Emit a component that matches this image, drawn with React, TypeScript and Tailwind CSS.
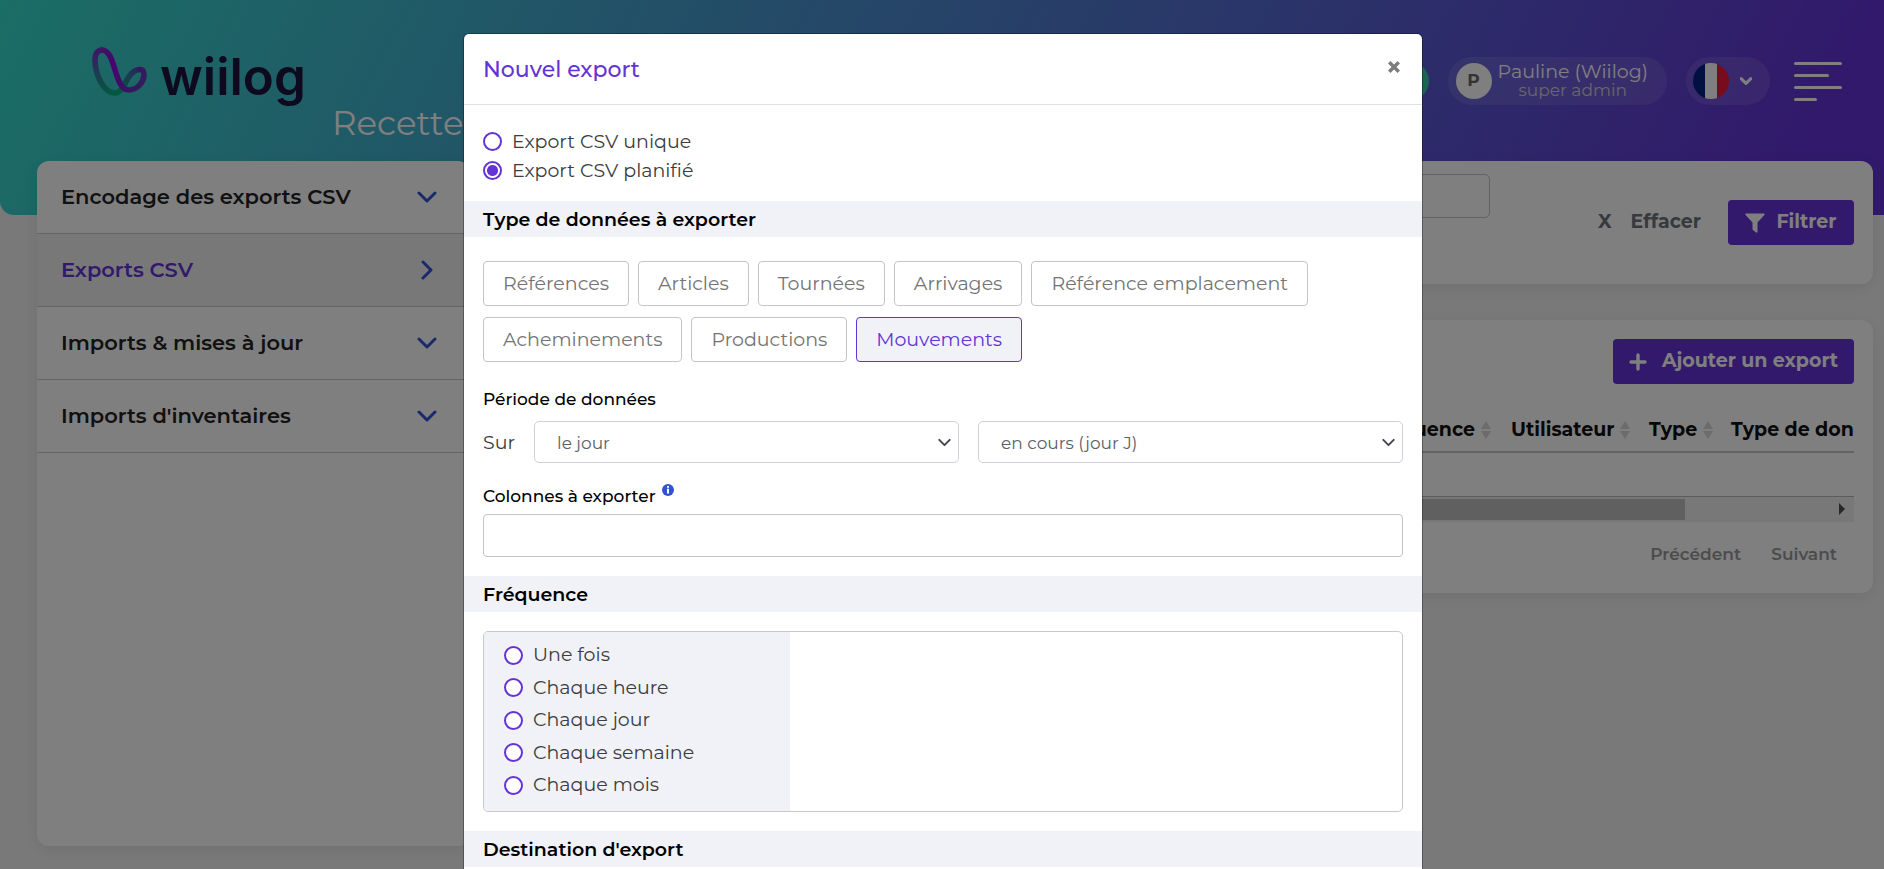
import type { ReactNode } from "react";

const sections = [
  { label: "Encodage des exports CSV", active: false },
  { label: "Exports CSV", active: true },
  { label: "Imports & mises à jour", active: false },
  { label: "Imports d'inventaires", active: false },
];

const dataTypes = [
  "Références",
  "Articles",
  "Tournées",
  "Arrivages",
  "Référence emplacement",
  "Acheminements",
  "Productions",
  "Mouvements",
];

const frequencies = ["Une fois", "Chaque heure", "Chaque jour", "Chaque semaine", "Chaque mois"];

function LogoMark() {
  return (
    <svg width="56" height="52" viewBox="0 0 56 52" fill="none" aria-hidden="true">
      <defs>
        <linearGradient id="loopLeft" x1="8" y1="4" x2="22" y2="48" gradientUnits="userSpaceOnUse">
          <stop offset="0" stopColor="#7a2cd0" />
          <stop offset="0.4" stopColor="#3f72a8" />
          <stop offset="1" stopColor="#06b080" />
        </linearGradient>
        <linearGradient id="loopRight" x1="24" y1="46" x2="50" y2="22" gradientUnits="userSpaceOnUse">
          <stop offset="0" stopColor="#06a87c" />
          <stop offset="0.5" stopColor="#2f80a0" />
          <stop offset="1" stopColor="#5a40bc" />
        </linearGradient>
        <linearGradient id="stroke" x1="8" y1="4" x2="52" y2="28" gradientUnits="userSpaceOnUse">
          <stop offset="0" stopColor="#7a2cc0" />
          <stop offset="0.4" stopColor="#9406e0" />
          <stop offset="1" stopColor="#6438b8" />
        </linearGradient>
      </defs>
      <path d="M10 4 C3 4 2 13 4 23 C7 36 14 47 23 47 C28 47 31 42 33 38" stroke="url(#loopLeft)" strokeWidth="5.600" strokeLinecap="round" />
      <path d="M32 39 C36 32 40 23.500 48 23.500" stroke="url(#loopRight)" strokeWidth="5.600" strokeLinecap="round" />
      <path d="M10 4 C24 4 22 44 36.500 44 C46 44 52 35 52 29 C52 25 51 23.500 48 23.500" stroke="url(#stroke)" strokeWidth="5.600" strokeLinecap="round" />
    </svg>
  );
}

function Chevron({ className }: { className: string }) {
  return (
    <svg viewBox="0 0 20 20" className={className} fill="none" stroke="currentColor" strokeLinecap="round" strokeLinejoin="round" aria-hidden="true">
      <path d="M2 6 L10 14 L18 6" />
    </svg>
  );
}

function SortIcon() {
  return (
    <svg width="10" height="18" viewBox="0 0 10 18" fill="#d8d8d8" aria-hidden="true" className="shrink-0">
      <path d="M5 0 L10 8 H0 Z M5 18 L0 10 H10 Z" />
    </svg>
  );
}

function TopBar() {
  return (
    <header className="h-[215px] rounded-bl-[14px] bg-[linear-gradient(118deg,#35dccb_0%,#6433d6_94%)]">
      <div className="flex items-start justify-between pr-[42px] pl-[92px]">
        <div className="flex items-start">
          <a href="#accueil" aria-label="wiilog" className="flex w-[240px] items-start gap-[12px] pt-[46px]">
            <LogoMark />
            <span className="font-['Inter',sans-serif] text-[51px]/[62px] font-semibold text-[#1a1440]">wiilog</span>
          </a>
          <span className="pt-[102px] text-[34px]/[42px] font-normal text-white">Recette</span>
        </div>
        <div className="flex items-center gap-[19px] pt-[57px]">
          <span className="size-[38px] rounded-full bg-[#36c9a8]" />
          <button className="flex h-12 items-center gap-[6px] rounded-full bg-white/10 pr-[19px] pl-2">
            <span className="flex size-9 items-center justify-center rounded-full bg-white text-[17px] font-bold text-[#666]">P</span>
            <span className="flex flex-col items-center text-[19px]/[18px] text-white">
              <span>Pauline (Wiilog)</span>
              <span className="text-[17px]/[18px] text-[#cfcfcf]">super admin</span>
            </span>
          </button>
          <button aria-label="Langue" className="flex h-12 items-center gap-[11px] rounded-full bg-white/10 pr-[18px] pl-[7px]">
            <span className="flex size-9 overflow-hidden rounded-full">
              <span className="flex-1 bg-[#002080]" />
              <span className="flex-1 bg-white" />
              <span className="flex-1 bg-[#f01838]" />
            </span>
            <Chevron className="size-3 stroke-[5px] text-white" />
          </button>
          <button aria-label="Menu" className="ml-[5px] flex w-12 flex-col gap-[9px]">
            <span className="h-[3px] w-full rounded-full bg-white" />
            <span className="h-[3px] w-[35px] rounded-full bg-white" />
            <span className="h-[3px] w-full rounded-full bg-white" />
            <span className="h-[3px] w-[23px] rounded-full bg-white" />
          </button>
        </div>
      </div>
    </header>
  );
}

function Sidebar() {
  return (
    <nav className="h-[685px] w-[433px] shrink-0 overflow-hidden rounded-[12px] bg-white shadow-[0_4px_16px_rgba(0,0,0,0.08)]">
      {sections.map((s) => (
        <a
          key={s.label}
          href="#section"
          className={
            s.active
              ? "flex h-[73px] items-center justify-between border-b border-[#c8c8c8] bg-[#f1f1f1] pr-[33px] pl-6 text-[21px] font-semibold text-[#6433d6]"
              : "flex h-[73px] items-center justify-between border-b border-[#c8c8c8] pr-[33px] pl-6 text-[21px] font-semibold text-[#222]"
          }
        >
          {s.label}
          <Chevron className={s.active ? "size-5 -rotate-90 stroke-[3px] text-[#3353d7]" : "size-5 stroke-[3px] text-[#3353d7]"} />
        </a>
      ))}
    </nav>
  );
}

function Content() {
  return (
    <main className="flex min-w-0 flex-1 flex-col gap-9">
      <section className="flex h-[123px] items-start justify-end rounded-[12px] bg-white pt-[13px] pr-[19px] shadow-[0_4px_16px_rgba(0,0,0,0.08)]">
        <input aria-label="Filtre" className="h-11 w-[300px] rounded-[5px] border border-[#c4c4c4]" />
        <div className="mt-[26px] ml-[108px] flex h-[45px] items-center">
          <button className="mr-[27px] flex items-center gap-[19px] text-[19px] font-bold text-[#6c757d]">
            <span>X</span>
            <span>Effacer</span>
          </button>
          <button className="flex h-[45px] w-[126px] items-center justify-center gap-[11px] rounded-[4px] bg-[#6433d6] text-[19px] font-bold text-white">
            <svg width="20" height="20" viewBox="0 0 20 20" fill="currentColor" aria-hidden="true">
              <path d="M1.200 0.500 H18.800 C19.800 0.500 20 1.500 19.400 2.100 L12.500 9.500 V18.800 C12.500 19.600 11.800 19.900 11.200 19.500 L8.200 17.200 C7.700 16.800 7.500 16.500 7.500 16 V9.500 L0.600 2.100 C0 1.500 0.200 0.500 1.200 0.500 Z" />
            </svg>
            Filtrer
          </button>
        </div>
      </section>
      <section className="h-[273px] rounded-[12px] bg-white px-[19px] pt-[19px] shadow-[0_4px_16px_rgba(0,0,0,0.08)]">
        <div className="flex justify-end">
          <button className="flex h-[45px] w-[241px] items-center justify-center gap-[15px] rounded-[4px] bg-[#6433d6] text-[19px] font-bold text-white">
            <svg width="18" height="18" viewBox="0 0 18 18" stroke="currentColor" strokeWidth="3.400" strokeLinecap="round" aria-hidden="true">
              <path d="M9 2 V16 M2 9 H16" />
            </svg>
            Ajouter un export
          </button>
        </div>
        <table className="mt-[22px] w-full table-fixed text-left text-[19px] text-[#111]">
          <thead>
            <tr className="h-[46px] border-b-2 border-[#c8c8c8]">
              <th className="pt-[3px] font-bold">
                <span className="flex items-center justify-end gap-[6px] pr-5">Fréquence <SortIcon /></span>
              </th>
              <th className="w-[138px] pt-[3px] font-bold">
                <span className="flex items-center gap-[6px]">Utilisateur <SortIcon /></span>
              </th>
              <th className="w-[82px] pt-[3px] font-bold">
                <span className="flex items-center gap-[6px]">Type <SortIcon /></span>
              </th>
              <th className="w-[123px] pt-[3px] font-bold whitespace-nowrap">Type de don</th>
            </tr>
          </thead>
          <tbody>
            <tr className="h-11 border-b border-[#b8b8b8]">
              <td colSpan={4} />
            </tr>
          </tbody>
        </table>
        <div className="flex h-[25px] items-center justify-between bg-[#f1f1f1] pr-[9px]">
          <span className="h-[21px] w-[88%] bg-[#c1c1c1]" />
          <svg width="6" height="12" viewBox="0 0 6 12" fill="#505050" aria-hidden="true">
            <path d="M0 0 L6 6 L0 12 Z" />
          </svg>
        </div>
        <div className="mt-5 flex justify-end gap-[30px] pr-[17px] text-[17px]/[24px] font-semibold text-[#999]">
          <button>Précédent</button>
          <button>Suivant</button>
        </div>
      </section>
    </main>
  );
}

function Radio({ name, label, defaultChecked }: { name: string; label: string; defaultChecked?: boolean }) {
  return (
    <label className="flex items-center gap-[10px]">
      <input
        type="radio"
        name={name}
        defaultChecked={defaultChecked}
        className="size-[19px] shrink-0 appearance-none rounded-full border-2 border-[#6433d6] bg-white checked:bg-[radial-gradient(circle,#6433d6_0_5px,white_6px)]"
      />
      {label}
    </label>
  );
}

function SectionTitle({ children }: { children: ReactNode }) {
  return <h3 className="flex h-9 items-center bg-[#f1f2f7] px-[19px] pt-[2px] text-[19px] font-semibold text-black">{children}</h3>;
}

function Select({ label, value }: { label: string; value: string }) {
  return (
    <div className="relative flex-1">
      <select
        aria-label={label}
        className="h-[42px] w-full appearance-none rounded-[5px] border border-[#ced0da] bg-white px-[22px] pt-[3px] text-[17px] text-[#5a6067]"
      >
        <option>{value}</option>
      </select>
      <Chevron className="pointer-events-none absolute top-[15px] right-2 size-[13px] stroke-[3px] text-[#43474f]" />
    </div>
  );
}

function ExportModal() {
  return (
    <div role="dialog" aria-labelledby="modal-title" className="mx-auto mt-[34px] w-full max-w-[958px] overflow-hidden rounded-t-[5px] bg-white text-[19px] text-[#3c3c3c] ring-1 ring-black/30">
      <div className="flex h-[71px] items-start justify-between border-b border-[#dee2e6] px-[19px]">
        <h2 id="modal-title" className="pt-[21px] text-[22px]/[30px] font-medium text-[#6433d6]">Nouvel export</h2>
        <button aria-label="Fermer" className="mt-[26px] mr-[3px] text-[#7c7c7c]">
          <svg width="12" height="14" viewBox="0 0 12 14" stroke="currentColor" strokeWidth="3.600" aria-hidden="true">
            <path d="M1.200 2.200 L10.800 11.800 M10.800 2.200 L1.200 11.800" />
          </svg>
        </button>
      </div>
      <div className="flex flex-col items-start px-[19px] pt-[22px] pb-4 leading-[29px]">
        <Radio name="mode" label="Export CSV unique" />
        <Radio name="mode" label="Export CSV planifié" defaultChecked />
      </div>
      <SectionTitle>Type de données à exporter</SectionTitle>
      <div className="px-[19px] pt-6 pb-[19px]">
        <div className="flex flex-wrap gap-x-[9px] gap-y-[11px]">
          {dataTypes.map((t) => (
            <button
              key={t}
              className={
                t === "Mouvements"
                  ? "h-[45px] rounded-[4px] border border-[#6433d6] bg-[#f1f2f7] px-[19px] pt-[2px] text-[#6433d6]"
                  : "h-[45px] rounded-[4px] border border-[#c4c4c4] px-[19px] pt-[2px] text-[#747474]"
              }
            >
              {t}
            </button>
          ))}
        </div>
        <p className="mt-[25px] text-[17px]/[24px] font-medium text-black">Période de données</p>
        <div className="mt-[10px] flex items-center gap-[19px]">
          <span className="pt-[2px]">Sur</span>
          <Select label="Période" value="le jour" />
          <Select label="Décalage" value="en cours (jour J)" />
        </div>
        <label htmlFor="columns" className="mt-[21px] flex gap-[6px] text-[17px]/[24px] font-medium text-black">
          Colonnes à exporter
          <svg width="12" height="12" viewBox="0 0 12 12" aria-hidden="true">
            <circle cx="6" cy="6" r="6" fill="#3353d7" />
            <path d="M5 2 H7 V3.700 H5 Z M5 4.700 H7 V9.500 H5 Z" fill="white" />
          </svg>
        </label>
        <input id="columns" className="mt-[6px] block h-[43px] w-full rounded-[4px] border border-[#c4c4c4] px-3" />
      </div>
      <SectionTitle>Fréquence</SectionTitle>
      <div className="px-[19px] py-[19px]">
        <div className="flex h-[181px] overflow-hidden rounded-[5px] border border-[#c8c8c8]">
          <div className="flex w-1/3 flex-col items-start justify-between bg-[#f1f2f7] pt-[7px] pb-[10px] pl-5 leading-8">
            {frequencies.map((f) => (
              <Radio key={f} name="frequency" label={f} />
            ))}
          </div>
        </div>
      </div>
      <SectionTitle>Destination d'export</SectionTitle>
      <div className="h-20" />
    </div>
  );
}

export default function App() {
  return (
    <div className="relative h-screen overflow-hidden bg-[#f3f3f3] font-['Montserrat','Inter',sans-serif]">
      <TopBar />
      <div className="relative -mt-[54px] flex items-start gap-[19px] pr-[11px] pl-[37px]">
        <Sidebar />
        <Content />
      </div>
      <div className="absolute inset-0 overflow-y-auto bg-black/50 [scrollbar-width:none]">
        <div className="flow-root pl-[2px]">
          <ExportModal />
        </div>
      </div>
    </div>
  );
}
